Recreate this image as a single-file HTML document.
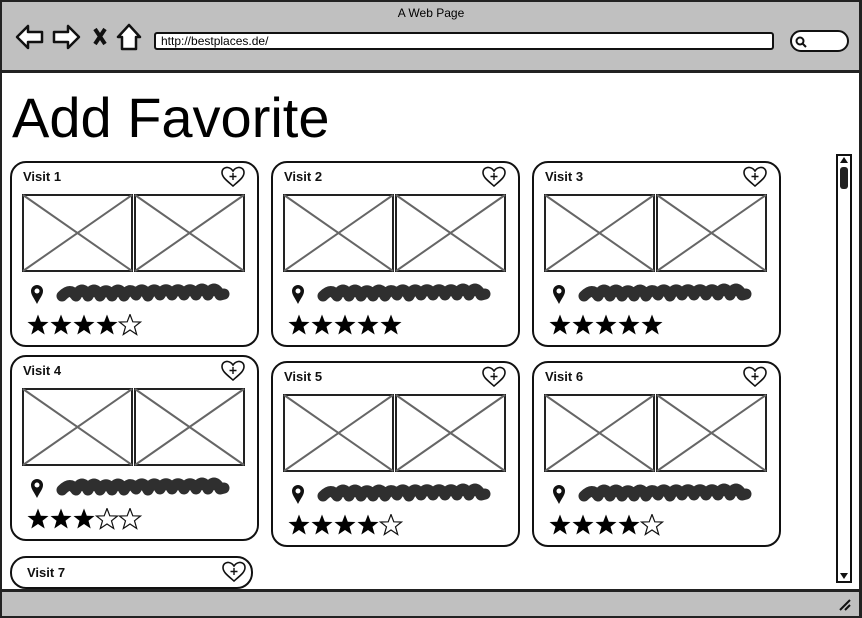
<!DOCTYPE html>
<html><head><meta charset="utf-8"><style>
*{box-sizing:border-box;margin:0;padding:0}
body{width:862px;height:618px;position:relative;background:#fff;font-family:"Liberation Sans",sans-serif;overflow:hidden}
.a{position:absolute}
.card{position:absolute;width:249px;height:186px;border:2px solid #111;border-radius:16px;background:#fff}
.t{position:absolute;left:11px;top:6px;font-size:13px;font-weight:bold;color:#111}
.h{position:absolute;left:209px;top:3px}
.i{position:absolute;left:10px;top:31px}
.p{position:absolute;left:18px;top:121px}
.s{position:absolute;left:15px;top:151px}
</style></head><body>
<svg width="0" height="0" style="position:absolute"><defs>
<g id="x"><rect x="1" y="1" width="109" height="76" fill="#fff" stroke="#222" stroke-width="2"/><path d="M1 1 L110 77 M110 1 L1 77" stroke="#666" stroke-width="2"/></g>
<g id="imgs"><use href="#x"/><use href="#x" x="112"/></g>
<path id="st" d="M11 0.5 L13.8 7.8 L21.5 8 L15.5 12.8 L17.7 20.5 L11 16 L4.3 20.5 L6.5 12.8 L0.5 8 L8.2 7.8 Z"/>
<g id="heart"><path d="M12 20 C5 14 1 11 1 6.5 C1 3 4 1 6.8 1.5 C9 1.9 11 3.5 12 5 C13 3.5 15 1.9 17.2 1.5 C20 1 23 3 23 6.5 C23 11 19 14 12 20 Z" fill="#fff" stroke="#111" stroke-width="1.6"/><path d="M12 7 V14 M8.5 10.5 H15.5" stroke="#111" stroke-width="1.4"/></g>
<g id="pin"><path d="M7 20 C4 14 1 11 1 7 A6 6 0 0 1 13 7 C13 11 10 14 7 20 Z" fill="#111"/><circle cx="7" cy="7" r="2.5" fill="#fff"/></g>
<g id="scr"><path d="M6 14 C12 8 16 8 20 14 C24 6 28 6 32 14 C36 6 40 6 44 14 C48 7 52 7 56 14 C60 6 64 6 68 14 C72 7 76 7 80 13 C84 6 88 6 92 14 C96 6 100 6 104 13 C108 6 112 6 116 13 C120 6 124 6 128 13 C132 6 136 6 140 13 C144 5 148 5 152 13 C156 5 160 5 164 13 L168 12" fill="none" stroke="#2f2f2f" stroke-width="11" stroke-linecap="round" stroke-linejoin="round"/></g>
</defs></svg>

<div class="a" style="left:0;top:0;width:862px;height:618px;border:2px solid #222;border-right:3px solid #222"></div>
<div class="a" style="left:2px;top:2px;width:857px;height:71px;background:#c0c0c0;border-bottom:3px solid #222"></div>
<div class="a" style="left:0;top:6px;width:862px;text-align:center;font-size:12px">A Web Page</div>
<svg class="a" style="left:14px;top:22px" width="130" height="30" viewBox="0 0 130 30">
<path d="M3 15 L14 4 V10 H28 V20 H14 V26 Z" fill="#fff" stroke="#111" stroke-width="2.5" stroke-linejoin="round"/>
<path d="M65 15 L54 4 V10 H40 V20 H54 V26 Z" fill="#fff" stroke="#111" stroke-width="2.5" stroke-linejoin="round"/>
<path d="M81 7 L91 22 M91 7 L81 22" stroke="#111" stroke-width="4"/>
<path d="M115 3 L104 15 H108 V27 H122 V15 H126 Z" fill="#fff" stroke="#111" stroke-width="2.5" stroke-linejoin="round"/>
</svg>
<div class="a" style="left:154px;top:32px;width:620px;height:18px;background:#fff;border:2px solid #111;border-radius:3px;font-size:12px;padding:0 5px;line-height:14px">http://bestplaces.de/</div>
<div class="a" style="left:790px;top:30px;width:59px;height:22px;background:#fff;border:2px solid #111;border-radius:11px"></div>
<svg class="a" style="left:794px;top:35px" width="14" height="14"><circle cx="6" cy="6" r="3.5" fill="none" stroke="#111" stroke-width="2"/><path d="M8.5 8.5 L12 12" stroke="#111" stroke-width="2"/></svg>
<div class="a" style="left:12px;top:85px;font-size:56px;color:#000;line-height:66px">Add Favorite</div>

<div class="a" style="left:836px;top:154px;width:16px;height:429px;border:2px solid #111;background:#fff"></div>
<div class="a" style="left:840px;top:167px;width:8px;height:22px;background:#222;border-radius:3px"></div>
<div class="a" style="left:840px;top:157px;border-left:4px solid transparent;border-right:4px solid transparent;border-bottom:6px solid #111"></div>
<div class="a" style="left:840px;top:573px;border-left:4px solid transparent;border-right:4px solid transparent;border-top:6px solid #111"></div>

<div class="card" style="left:10px;top:161px"><div class="t">Visit 1</div>
<svg class="h" width="24" height="22"><use href="#heart"/></svg>
<svg class="i" width="224" height="78"><use href="#imgs"/></svg>
<svg class="p" width="14" height="21"><use href="#pin"/></svg>
<svg class="a" style="left:44px;top:119px" width="175" height="26"><use href="#scr"/></svg>
<svg class="s" width="120" height="22"><use href="#st"/><use href="#st" x="23"/><use href="#st" x="46"/><use href="#st" x="69"/><use href="#st" x="92" fill="#fff" stroke="#111" stroke-width="1.2"/></svg></div>
<div class="card" style="left:271px;top:161px"><div class="t">Visit 2</div>
<svg class="h" width="24" height="22"><use href="#heart"/></svg>
<svg class="i" width="224" height="78"><use href="#imgs"/></svg>
<svg class="p" width="14" height="21"><use href="#pin"/></svg>
<svg class="a" style="left:44px;top:119px" width="175" height="26"><use href="#scr"/></svg>
<svg class="s" width="120" height="22"><use href="#st"/><use href="#st" x="23"/><use href="#st" x="46"/><use href="#st" x="69"/><use href="#st" x="92"/></svg></div>
<div class="card" style="left:532px;top:161px"><div class="t">Visit 3</div>
<svg class="h" width="24" height="22"><use href="#heart"/></svg>
<svg class="i" width="224" height="78"><use href="#imgs"/></svg>
<svg class="p" width="14" height="21"><use href="#pin"/></svg>
<svg class="a" style="left:44px;top:119px" width="175" height="26"><use href="#scr"/></svg>
<svg class="s" width="120" height="22"><use href="#st"/><use href="#st" x="23"/><use href="#st" x="46"/><use href="#st" x="69"/><use href="#st" x="92"/></svg></div>
<div class="card" style="left:10px;top:355px"><div class="t">Visit 4</div>
<svg class="h" width="24" height="22"><use href="#heart"/></svg>
<svg class="i" width="224" height="78"><use href="#imgs"/></svg>
<svg class="p" width="14" height="21"><use href="#pin"/></svg>
<svg class="a" style="left:44px;top:119px" width="175" height="26"><use href="#scr"/></svg>
<svg class="s" width="120" height="22"><use href="#st"/><use href="#st" x="23"/><use href="#st" x="46"/><g fill="#fff" stroke="#111" stroke-width="1.2"><use href="#st" x="69"/><use href="#st" x="92"/></g></svg></div>
<div class="card" style="left:271px;top:361px"><div class="t">Visit 5</div>
<svg class="h" width="24" height="22"><use href="#heart"/></svg>
<svg class="i" width="224" height="78"><use href="#imgs"/></svg>
<svg class="p" width="14" height="21"><use href="#pin"/></svg>
<svg class="a" style="left:44px;top:119px" width="175" height="26"><use href="#scr"/></svg>
<svg class="s" width="120" height="22"><use href="#st"/><use href="#st" x="23"/><use href="#st" x="46"/><use href="#st" x="69"/><use href="#st" x="92" fill="#fff" stroke="#111" stroke-width="1.2"/></svg></div>
<div class="card" style="left:532px;top:361px"><div class="t">Visit 6</div>
<svg class="h" width="24" height="22"><use href="#heart"/></svg>
<svg class="i" width="224" height="78"><use href="#imgs"/></svg>
<svg class="p" width="14" height="21"><use href="#pin"/></svg>
<svg class="a" style="left:44px;top:119px" width="175" height="26"><use href="#scr"/></svg>
<svg class="s" width="120" height="22"><use href="#st"/><use href="#st" x="23"/><use href="#st" x="46"/><use href="#st" x="69"/><use href="#st" x="92" fill="#fff" stroke="#111" stroke-width="1.2"/></svg></div>
<div class="card" style="left:10px;top:556px;width:243px;height:33px"><div class="t" style="left:15px;top:7px">Visit 7</div>
<svg class="h" style="left:210px;top:3px" width="24" height="22"><use href="#heart"/></svg></div>

<div class="a" style="left:2px;top:589px;width:857px;height:27px;background:#c0c0c0;border-top:3px solid #222"></div>
<svg class="a" style="left:838px;top:598px" width="14" height="14"><path d="M2 12 L12 2 M7 12 L12 7" stroke="#111" stroke-width="2"/></svg>
</body></html>
